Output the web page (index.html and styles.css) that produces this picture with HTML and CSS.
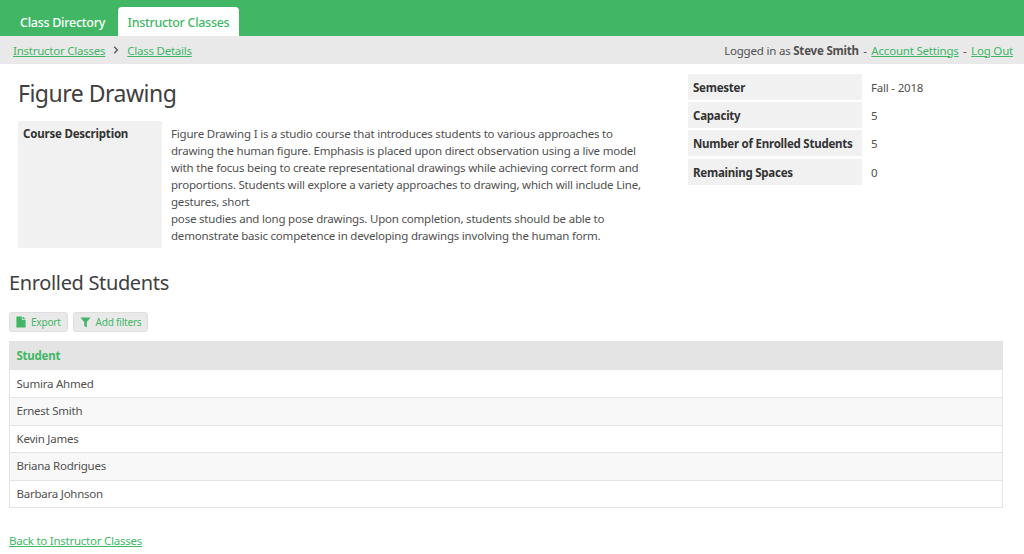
FILE: index.html
```html
<!DOCTYPE html>
<html lang="en">
<head>
<meta charset="utf-8">
<title>Class Details</title>
<link rel="stylesheet" href="styles.css">
</head>
<body>
<header class="topbar">
  <nav class="tabs">
    <a class="tab" href="#">Class Directory</a>
    <a class="tab tab-active" href="#">Instructor Classes</a>
  </nav>
</header>
<div class="crumbbar">
  <div class="crumbs">
    <a href="#">Instructor Classes</a>
    <svg class="chev" width="6" height="8" viewBox="0 0 6 8"><path d="M1.2 0.8 L4.4 4 L1.2 7.2" fill="none" stroke="#555" stroke-width="1.3"/></svg>
    <a href="#">Class Details</a>
  </div>
  <div class="session">Logged in as <b>Steve Smith</b> <span class="sep">-</span> <a href="#">Account Settings</a> <span class="sep">-</span> <a href="#">Log Out</a></div>
</div>
<main class="page">
  <section class="details">
    <div class="course">
      <h1>Figure Drawing</h1>
      <div class="desc">
        <div class="desc-label">Course Description</div>
        <div class="desc-text">Figure Drawing I is a studio course that introduces students to various approaches to drawing the human figure. Emphasis is placed upon direct observation using a live model with the focus being to create representational drawings while achieving correct form and proportions. Students will explore a variety approaches to drawing, which will include Line, gestures, short<br>pose studies and long pose drawings. Upon completion, students should be able to demonstrate basic competence in developing drawings involving the human form.</div>
      </div>
    </div>
    <div class="facts">
      <div class="fact-label">Semester</div><div class="fact-value">Fall - 2018</div>
      <div class="fact-label">Capacity</div><div class="fact-value">5</div>
      <div class="fact-label">Number of Enrolled Students</div><div class="fact-value">5</div>
      <div class="fact-label">Remaining Spaces</div><div class="fact-value">0</div>
    </div>
  </section>
  <h2>Enrolled Students</h2>
  <div class="tools">
    <button class="tool" type="button">
      <svg width="10" height="12" viewBox="0 0 12 14"><path d="M0.5 0.5 H7 V4.5 H11.5 V13.5 H0.5 Z M8 0.5 L11.5 3.6 H8 Z" fill="#41b765"/></svg>
      Export
    </button>
    <button class="tool" type="button">
      <svg width="11" height="11" viewBox="0 0 13 13"><path d="M0.5 0.5 H12.5 L8 6 V12.5 L5 10.5 V6 Z" fill="#41b765"/></svg>
      Add filters
    </button>
  </div>
  <div class="students">
    <div class="students-head">Student</div>
    <div class="row">Sumira Ahmed</div>
    <div class="row row-alt">Ernest Smith</div>
    <div class="row">Kevin James</div>
    <div class="row row-alt">Briana Rodrigues</div>
    <div class="row">Barbara Johnson</div>
  </div>
  <a class="back" href="#">Back to Instructor Classes</a>
</main>
</body>
</html>
```
FILE: styles.css
```css
* { box-sizing: border-box; }
html, body { margin: 0; padding: 0; }
body {
  font-family: "Noto Sans", "Open Sans", sans-serif;
  font-size: 11.5px;
  letter-spacing: -0.2px;
  line-height: 17px;
  color: #505050;
  background: #fff;
  overflow: hidden;
}
a { color: #41b765; text-decoration: underline; }
.topbar { background: #41b765; height: 36px; display: flex; align-items: flex-end; padding-left: 10px; }
.tabs { display: flex; gap: 2.5px; }
.tab {
  display: block;
  height: 29px;
  padding: 6px 10px 0;
  font-size: 12.5px;
  letter-spacing: -0.27px;
  font-weight: 500;
  line-height: 19px;
  color: #fff;
  text-decoration: none;
  border-radius: 4px 4px 0 0;
}
.tab-active { background: #fff; color: #41b765; letter-spacing: -0.3px; }
.crumbbar {
  background: #e9e9e9;
  height: 28px;
  display: flex;
  justify-content: space-between;
  align-items: center;
  padding: 0 11px 0 13px;
  letter-spacing: -0.24px;
}
.crumbs { display: flex; align-items: center; gap: 8px; }
.session { letter-spacing: -0.2px; }
.sep { margin: 0 1.7px; }
.page { padding: 0 21px 0 9px; }
.details { display: flex; justify-content: space-between; }
.course { width: 640px; padding-left: 9px; }
h1 { margin: 15px 0 13px; font-size: 23px; letter-spacing: -0.5px; line-height: 29px; font-weight: 400; color: #404040; }
.desc { display: flex; gap: 9px; }
.desc-label { flex: 0 0 144px; background: #f1f1f1; padding: 4px 5px; font-weight: 700; color: #333; }
.desc-text { height: 127px; padding-top: 4px; width: 475px; }
.facts {
  margin: 10px 0 0;
  width: 315px;
  display: grid;
  grid-template-columns: 174px 1fr;
  grid-auto-rows: 26px;
  row-gap: 2.2px;
  align-items: stretch;
}
.fact-label { background: #f1f1f1; padding: 5px; font-weight: 700; color: #333; white-space: nowrap; letter-spacing: -0.24px; }
.fact-value { padding: 5px 9px; }
h2 { margin: 21px 0 15px; font-size: 20px; letter-spacing: -0.35px; line-height: 28px; font-weight: 400; color: #404040; }
.tools { display: flex; gap: 5px; }
.tool {
  display: flex;
  align-items: center;
  gap: 5px;
  height: 20px;
  padding: 0 6px;
  border: 1px solid #dedede;
  border-radius: 3px;
  background: #e9e9e9;
  color: #41b765;
  font: 10px/16px "Noto Sans", "Open Sans", sans-serif;
  letter-spacing: -0.2px;
}
.students { margin-top: 9px; border: 1px solid #e4e4e4; border-top: 0; }
.students-head { height: 29px; margin: 0 -1px; background: #e4e4e4; color: #41b765; font-weight: 700; padding: 6px 7.5px; letter-spacing: -0.24px; }
.row { height: 27.4px; padding: 4px 6.5px; border-top: 1px solid #e4e4e4; letter-spacing: -0.24px; }
.students-head + .row { border-top: 0; padding-top: 5px; }
.row-alt { background: #f8f8f8; }
.back { display: inline-block; margin-top: 24px; letter-spacing: -0.24px; }
```
